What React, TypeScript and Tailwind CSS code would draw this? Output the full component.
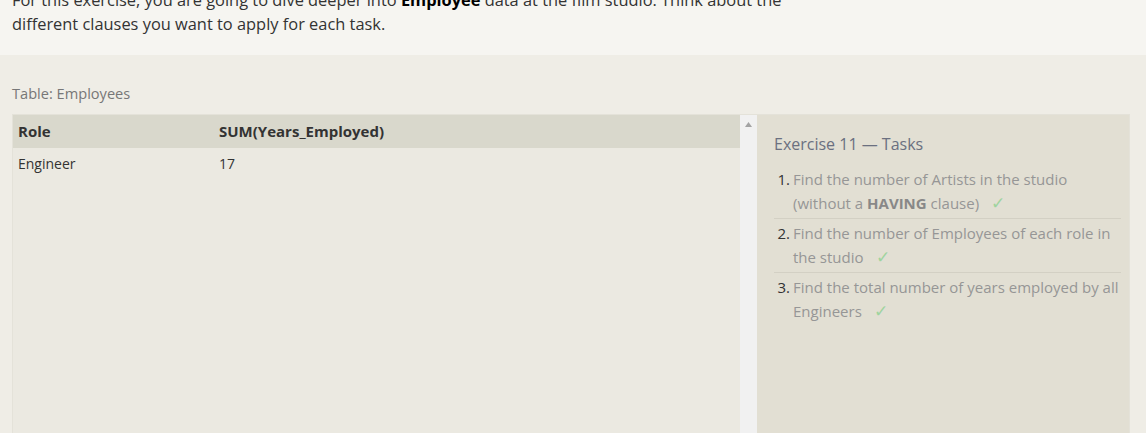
const tasks = [
  { lines: ['Find the number of Artists in the studio', <>(without a <b className="font-bold text-[#888]">HAVING</b> clause)</>] },
  { lines: ['Find the number of Employees of each role in', 'the studio'] },
  { lines: ['Find the total number of years employed by all', 'Engineers'] },
]

export default function App() {
  return (
    <div className="h-[433px] overflow-hidden bg-[#efede6] font-['Open_Sans',sans-serif]">
      <div className="h-[55px] overflow-hidden bg-[#f6f5f1] px-3">
        <p className="-mt-3 text-[16.4px] leading-[24px] text-[#333]">
          For this exercise, you are going to dive deeper into <b className="font-bold text-black">Employee</b> data at the film studio. Think about the
          <br />
          different clauses you want to apply for each task.
        </p>
      </div>

      <div className="pl-3 pr-4">
        <div className="pt-[24px] pb-[7px] text-[14.6px] leading-[28px] text-[#777]">Table: Employees</div>

        <div className="flex h-[330px] border border-[#e4e2d9]">
          <div className="flex-1 bg-[#ebe9e1]">
            <div className="flex h-[33px] items-center bg-[#d9d8cc] text-[15px] font-bold text-[#333]">
              <div className="w-[206px] pl-[5px]">Role</div>
              <div>SUM(Years_Employed)</div>
            </div>
            <div className="flex h-[31px] items-center text-[14px] text-[#333]">
              <div className="w-[206px] pl-[5px]">Engineer</div>
              <div>17</div>
            </div>
          </div>

          <div className="flex w-[17px] justify-center bg-[#f1f1f1] pt-[7px]">
            <svg width="7" height="5" viewBox="0 0 7 5">
              <path d="M3.5 0L7 5H0z" fill="#a3a3a3" />
            </svg>
          </div>

          <div className="w-[372px] bg-[#e2dfd3] pl-[17px] pr-[8px] pt-[17px]">
            <h3 className="text-[16px] leading-[24px] text-[#6b7080]">Exercise 11 — Tasks</h3>
            <ol className="mt-[12px]">
              {tasks.map((t, i) => (
                <li key={i} className="flex border-b border-[#d3d0c4] pb-[3px] mb-[3px] last:border-b-0 text-[15px] leading-[23px]">
                  <span className="w-[19px] shrink-0 text-right pr-[3px] text-[#333]">{i + 1}.</span>
                  <span className="flex-1 text-[#969696]">
                    {t.lines[0]}
                    <br />
                    {t.lines[1]}
                    <span className="ml-[12px] text-[17px] font-light text-[#9fd49f]">✓</span>
                  </span>
                </li>
              ))}
            </ol>
          </div>
        </div>
      </div>
    </div>
  )
}
